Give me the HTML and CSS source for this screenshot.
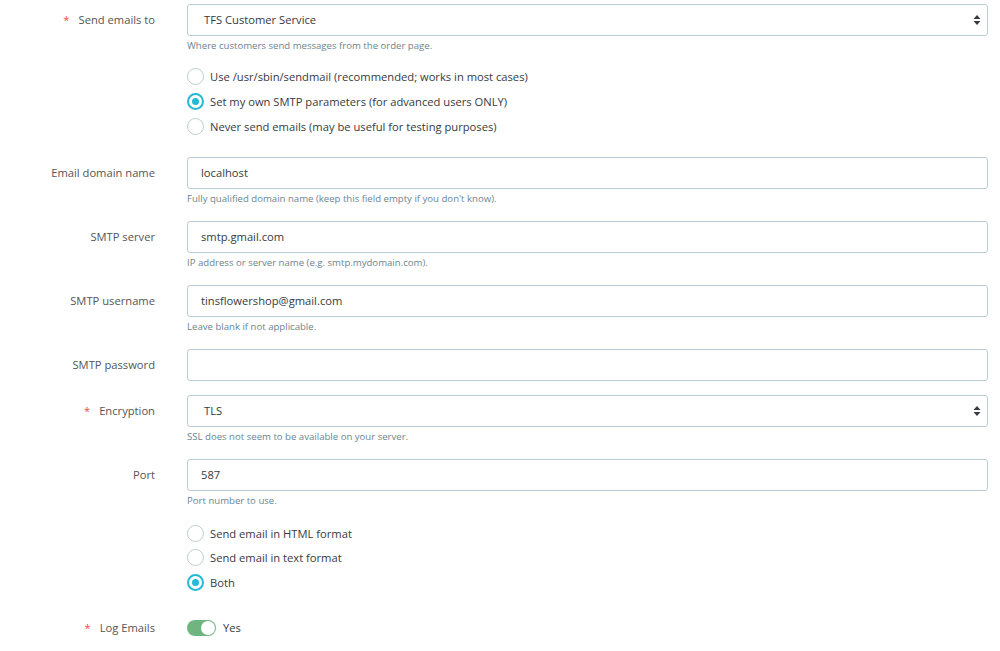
FILE: index.html
```html
<!DOCTYPE html>
<html lang="en">
<head>
  <meta charset="UTF-8" />
  <title>Email settings</title>
  <link rel="stylesheet" href="styles.css">
</head>
<body>
  <form class="form">

    <div class="row">
      <label class="label"><span class="required">*</span>Send emails to</label>
      <div class="field">
        <div class="select">
          <span>TFS Customer Service</span>
          <svg class="arrows" width="8" height="12" viewBox="0 0 8 12"><path d="M4 1 L7.5 5 H0.5 Z M4 11 L7.5 7 H0.5 Z" fill="#363a41"/></svg>
        </div>
        <p class="help">Where customers send messages from the order page.</p>
        <div class="radios">
          <div class="radio"><span class="dot"></span>Use /usr/sbin/sendmail (recommended; works in most cases)</div>
          <div class="radio"><span class="dot checked"></span>Set my own SMTP parameters (for advanced users ONLY)</div>
          <div class="radio"><span class="dot"></span>Never send emails (may be useful for testing purposes)</div>
        </div>
      </div>
    </div>

    <div class="row">
      <label class="label">Email domain name</label>
      <div class="field">
        <div class="input">localhost</div>
        <p class="help">Fully qualified domain name (keep this field empty if you don't know).</p>
      </div>
    </div>

    <div class="row">
      <label class="label">SMTP server</label>
      <div class="field">
        <div class="input">smtp.gmail.com</div>
        <p class="help">IP address or server name (e.g. smtp.mydomain.com).</p>
      </div>
    </div>

    <div class="row">
      <label class="label">SMTP username</label>
      <div class="field">
        <div class="input">tinsflowershop@gmail.com</div>
        <p class="help">Leave blank if not applicable.</p>
      </div>
    </div>

    <div class="row">
      <label class="label">SMTP password</label>
      <div class="field">
        <div class="input"></div>
      </div>
    </div>

    <div class="row">
      <label class="label"><span class="required">*</span>Encryption</label>
      <div class="field">
        <div class="select">
          <span>TLS</span>
          <svg class="arrows" width="8" height="12" viewBox="0 0 8 12"><path d="M4 1 L7.5 5 H0.5 Z M4 11 L7.5 7 H0.5 Z" fill="#363a41"/></svg>
        </div>
        <p class="help">SSL does not seem to be available on your server.</p>
      </div>
    </div>

    <div class="row">
      <label class="label">Port</label>
      <div class="field">
        <div class="input">587</div>
        <p class="help">Port number to use.</p>
        <div class="radios radios-small">
          <div class="radio"><span class="dot"></span>Send email in HTML format</div>
          <div class="radio"><span class="dot"></span>Send email in text format</div>
          <div class="radio"><span class="dot checked"></span>Both</div>
        </div>
      </div>
    </div>

    <div class="row row-switch">
      <label class="label"><span class="required">*</span>Log Emails</label>
      <div class="field switch-field">
        <span class="switch"><span class="knob"></span></span>
        <span>Yes</span>
      </div>
    </div>

  </form>
</body>
</html>
```

FILE: styles.css
```css
body {
  margin: 0;
  background: #fff;
  font-family: "Open Sans", "Noto Sans", sans-serif;
  font-size: 11.2px;
  color: #363a41;
}

.form {
  padding-top: 4px;
}

.row {
  display: grid;
  grid-template-columns: 171px 801px;
  column-gap: 16px;
  margin-bottom: 14px;
}

.label {
  text-align: right;
  padding-right: 16px;
  padding-top: 7px;
  line-height: 18px;
  color: #555;
}

.required {
  color: #f54c3e;
  margin-right: 9px;
}

.input, .select {
  box-sizing: border-box;
  height: 32px;
  border: 1px solid #bbcdd2;
  border-radius: 3px;
  padding: 0 13px;
  line-height: 30px;
  color: #363a41;
}

.select {
  display: flex;
  justify-content: space-between;
  align-items: center;
  padding: 0 6px 0 16px;
}

.help {
  margin: 2px 0 0;
  font-size: 9.6px;
  line-height: 16px;
  color: #6c868e;
}

.radios {
  margin-top: 10px;
  padding-bottom: 4px;
}

.radios-small {
  margin-top: 12px;
  padding-bottom: 0;
}

.radio {
  display: flex;
  align-items: center;
  height: 25px;
  color: #363a41;
}

.radios-small .radio {
  height: 24.5px;
}

.dot {
  box-sizing: border-box;
  width: 17px;
  height: 17px;
  border: 1px solid #bbcdd2;
  border-radius: 50%;
  margin-right: 6px;
  display: flex;
  align-items: center;
  justify-content: center;
}

.dot.checked {
  border: 2px solid #25b9d7;
}

.dot.checked::after {
  content: "";
  width: 7px;
  height: 7px;
  border-radius: 50%;
  background: #25b9d7;
}

.row-switch {
  margin-top: 24px;
}

.row-switch .label {
  padding-top: 0;
}

.switch-field {
  display: flex;
  align-items: center;
  height: 18px;
}

.switch {
  box-sizing: border-box;
  width: 29px;
  height: 16px;
  border-radius: 8px;
  background: #70b580;
  padding: 1px;
  display: flex;
  justify-content: flex-end;
  margin-right: 7px;
}

.knob {
  width: 14px;
  height: 14px;
  border-radius: 50%;
  background: #fff;
}
```
